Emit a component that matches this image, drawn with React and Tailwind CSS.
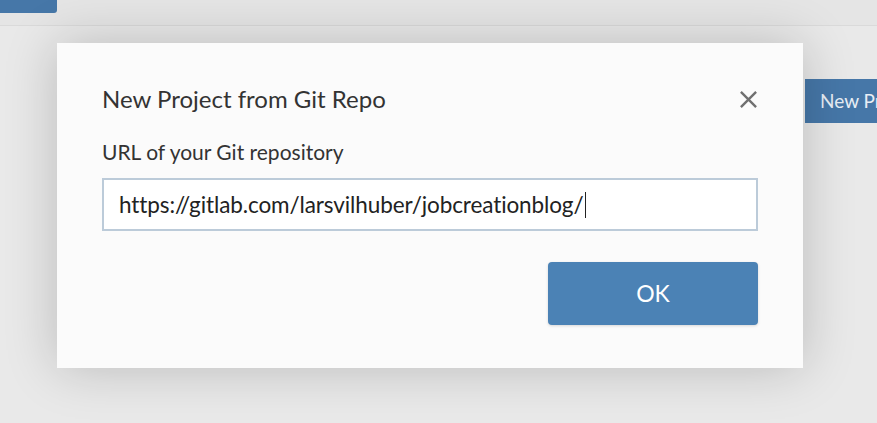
import React from "react";

export default function App() {
  return (
    <div className="relative w-full h-[423px] overflow-hidden bg-[#e9e9e9] font-['Lato','Open_Sans',sans-serif]">
      {/* page behind the dialog */}
      <div className="h-[26px] bg-[#e5e5e5] border-b border-[#dadada]">
        <div className="w-[57px] h-[13px] bg-[#4677a8] rounded-br-[3px]" />
      </div>
      <div className="flex justify-end pt-[53px]">
        <div className="w-[72px] h-[44px] bg-[#4677a8] text-[#e8eef5] text-[19px] pl-[15px] flex items-center whitespace-nowrap overflow-hidden">
          New Project
        </div>
      </div>

      {/* dialog */}
      <div className="absolute left-[57px] top-[43px] w-[746px] h-[325px] bg-[#fbfbfb] shadow-[0_0_50px_rgba(0,0,0,0.2)] px-[45px] pt-[41px]">
        <div className="flex items-center justify-between h-[30px]">
          <h2 className="text-[24px] text-[#333] leading-none">New Project from Git Repo</h2>
          <button className="w-[22px] h-[22px] flex items-center justify-center text-[#707070] mr-[-1px]">
            <svg width="19" height="19" viewBox="0 0 20 20" fill="none" stroke="currentColor" strokeWidth="2.5">
              <path d="M2 2L18 18M18 2L2 18" />
            </svg>
          </button>
        </div>
        <div className="mt-[25px] text-[21px] text-[#333] leading-[26px]">URL of your Git repository</div>
        <div className="mt-[13px] h-[53px] border-2 border-[#bccbd9] bg-white flex items-center px-[15px]">
          <span className="text-[22.5px] text-[#222] tracking-[-0.1px]">https://gitlab.com/larsvilhuber/jobcreationblog/</span>
          <span className="w-px h-[26px] bg-[#222] ml-[1px]" />
        </div>
        <div className="flex justify-end mt-[31px]">
          <button className="w-[210px] h-[63px] rounded-[4px] bg-[#4b82b5] text-white text-[23px] shadow-[0_1px_3px_rgba(0,0,0,0.15)]">
            OK
          </button>
        </div>
      </div>
    </div>
  );
}
